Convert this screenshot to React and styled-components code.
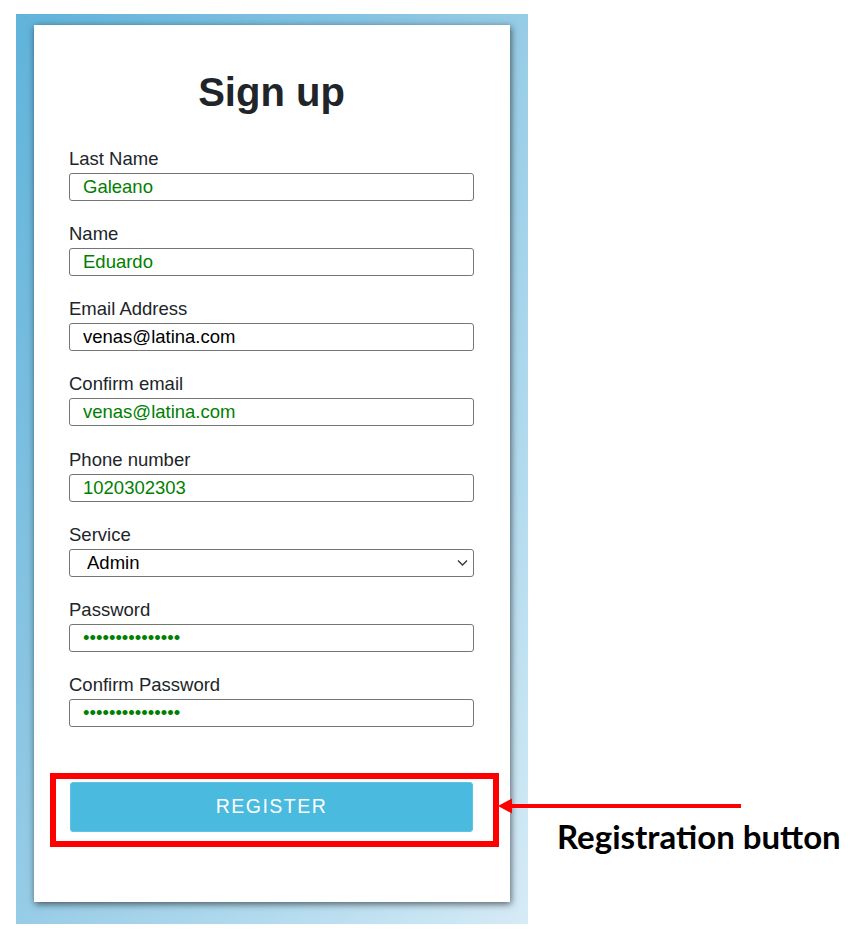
import React from "react";
import styled, { createGlobalStyle } from "styled-components";

const Global = createGlobalStyle`
  html, body { margin: 0; padding: 0; background: #ffffff; }
  body { font-family: "Liberation Sans", Arial, sans-serif; }
`;

const Page = styled.div`
  padding: 14px 0 22px 16px;
`;

const Panel = styled.div`
  width: 512px;
  box-sizing: border-box;
  padding: 11px 18px 22px 18px;
  background: linear-gradient(to bottom right, #60b3db 0%, #8cc6e3 40%, #b3dbee 75%, #d6ebf6 100%);
`;

const Card = styled.div`
  width: 476px;
  box-sizing: border-box;
  background: #ffffff;
  padding: 43px 36px 55px 35px;
  box-shadow: 1px 2px 7px rgba(0, 0, 0, 0.6);
`;

const Title = styled.h1`
  margin: 0 0 32px;
  font-family: "Liberation Sans", Arial, sans-serif;
  font-size: 40px;
  line-height: 48px;
  font-weight: 700;
  color: #212529;
  text-align: center;
`;

const Form = styled.form`
  display: flex;
  flex-direction: column;
  gap: 22.15px;
`;

const Field = styled.div`
  display: flex;
  flex-direction: column;
`;

const Label = styled.label`
  font-size: 18.5px;
  line-height: 22px;
  color: #212529;
  margin-bottom: 3px;
`;

const Input = styled.input`
  width: 100%;
  height: 28px;
  box-sizing: border-box;
  border: 1px solid #767676;
  border-radius: 3px;
  padding: 0 13px;
  margin: 0;
  font-family: "Liberation Sans", Arial, sans-serif;
  font-size: 18.5px;
  color: ${(p) => p.$color || "#000000"};
  background: #ffffff;
  outline: none;
`;

const SelectWrap = styled.div`
  position: relative;
`;

const Select = styled.select`
  width: 100%;
  height: 28px;
  box-sizing: border-box;
  border: 1px solid #767676;
  border-radius: 3px;
  padding: 0 30px 0 17px;
  margin: 0;
  font-family: "Liberation Sans", Arial, sans-serif;
  font-size: 18.5px;
  color: #000000;
  background: #ffffff;
  appearance: none;
  -webkit-appearance: none;
  outline: none;
`;

const Chevron = styled.svg`
  position: absolute;
  right: 6px;
  top: 9px;
  width: 11px;
  height: 9px;
  pointer-events: none;
`;

const Highlight = styled.div`
  position: relative;
  margin: 46px -25px 0 -19px;
  border: 6px solid #ff0000;
  padding: 3px 20px 9px 14px;
`;

const RegisterButton = styled.button`
  display: block;
  width: 100%;
  height: 50px;
  box-sizing: border-box;
  border: 1px solid #5fc3e6;
  border-radius: 3px;
  background: #4abade;
  color: #ffffff;
  font-family: "Liberation Sans", Arial, sans-serif;
  font-size: 19.5px;
  letter-spacing: 1.5px;
  cursor: pointer;
`;

const Arrow = styled.svg`
  position: absolute;
  left: calc(100% + 5px);
  top: 19px;
  width: 243px;
  height: 16px;
  overflow: visible;
`;

const Callout = styled.div`
  position: absolute;
  left: calc(100% + 64px);
  top: 39px;
  white-space: nowrap;
  font-family: Lato, "Open Sans", sans-serif;
  font-weight: 700;
  font-size: 33px;
  line-height: 36px;
  color: #000000;
`;

const fields = [
  { label: "Last Name", type: "text", value: "Galeano", color: "#008000" },
  { label: "Name", type: "text", value: "Eduardo", color: "#008000" },
  { label: "Email Address", type: "text", value: "venas@latina.com", color: "#000000" },
  { label: "Confirm email", type: "text", value: "venas@latina.com", color: "#008000" },
  { label: "Phone number", type: "text", value: "1020302303", color: "#008000" },
];

const passwords = [
  { label: "Password", value: "secretpassword1" },
  { label: "Confirm Password", value: "secretpassword1" },
];

export default function App() {
  return (
    <>
      <Global />
      <Page>
        <Panel>
          <Card>
            <Title>Sign up</Title>
            <Form onSubmit={(e) => e.preventDefault()}>
              {fields.map((f) => (
                <Field key={f.label}>
                  <Label>{f.label}</Label>
                  <Input type={f.type} defaultValue={f.value} $color={f.color} />
                </Field>
              ))}
              <Field>
                <Label>Service</Label>
                <SelectWrap>
                  <Select defaultValue="Admin">
                    <option>Admin</option>
                    <option>User</option>
                  </Select>
                  <Chevron viewBox="0 0 11 9">
                    <path d="M1 2.5 L5.5 7 L10 2.5" fill="none" stroke="#333" strokeWidth="1.3" />
                  </Chevron>
                </SelectWrap>
              </Field>
              {passwords.map((f) => (
                <Field key={f.label}>
                  <Label>{f.label}</Label>
                  <Input type="password" defaultValue={f.value} $color="#008000" />
                </Field>
              ))}
            </Form>
            <Highlight>
              <RegisterButton type="button">REGISTER</RegisterButton>
              <Arrow viewBox="0 0 243 16">
                <polygon points="0,8 14,0.5 14,15.5" fill="#ff0000" />
                <rect x="12" y="6" width="231" height="4" fill="#ff0000" />
              </Arrow>
              <Callout>Registration button</Callout>
            </Highlight>
          </Card>
        </Panel>
      </Page>
    </>
  );
}
